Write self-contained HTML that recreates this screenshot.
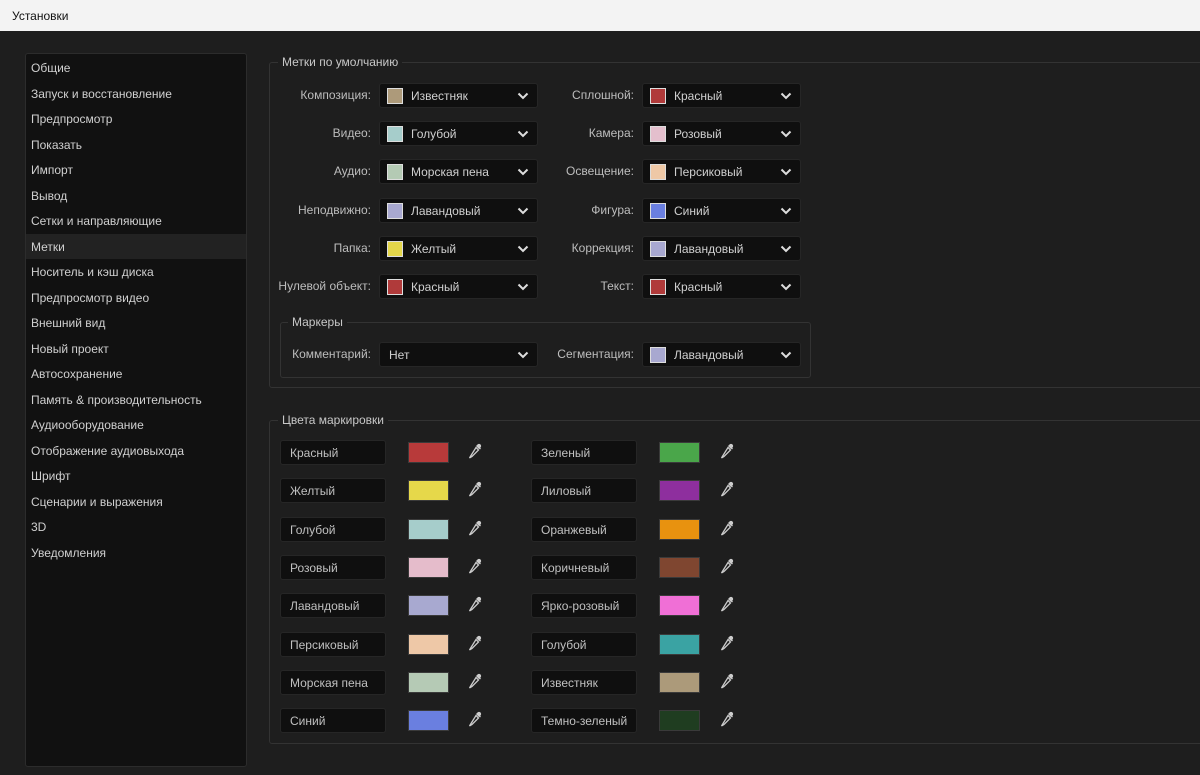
<!DOCTYPE html>
<html><head><meta charset="utf-8"><style>
*{box-sizing:border-box;margin:0;padding:0}
body{width:1200px;height:775px;background:#1e1e1e;font-family:"Liberation Sans","DejaVu Sans",sans-serif;font-size:12px;color:#c8c8c8;position:relative;overflow:hidden}
.title{position:absolute;left:0;top:0;width:1200px;height:31px;background:#f3f3f3;color:#111;font-size:12px;padding:9px 0 0 12px}
.side{position:absolute;left:25px;top:53px;width:222px;height:714px;background:#111;border:1px solid #2c2c2c;border-radius:3px}
.side div{position:absolute;left:0;width:220px;height:25px;padding:6px 0 0 5px;color:#d0d0d0}
.side div.sel{background:#222}
.grp{position:absolute;border:1px solid #333;border-radius:3px}
.gt{position:absolute;background:#1e1e1e;padding:0 4px;color:#c8c8c8}
.lbl{position:absolute;text-align:right;color:#bdbdbd}
.dd{position:absolute;width:159px;height:25px;background:#0f0f0f;border:1px solid #262626;border-radius:3px;color:#d0d0d0;padding:5px 0 0 31px}
.dd.n{padding-left:9px}
.dd .sw{position:absolute;left:7px;top:4px;width:16px;height:16px;border:1px solid #ddd}
.dd svg{position:absolute;right:8px;top:8px}
.tb{position:absolute;width:106px;height:25px;background:#0f0f0f;border:1px solid #262626;border-radius:3px;padding:5px 0 0 9px;color:#c0c0c0}
.cs{position:absolute;width:41px;height:21px;border:1px solid #3a3a3a}
.ed{position:absolute}
</style></head><body>
<div class="title">Установки</div>
<div class="side">
<div style="top:1px">Общие</div><div style="top:27px">Запуск и восстановление</div><div style="top:52px">Предпросмотр</div><div style="top:78px">Показать</div><div style="top:103px">Импорт</div><div style="top:129px">Вывод</div><div style="top:154px">Сетки и направляющие</div><div class="sel" style="top:180px">Метки</div><div style="top:205px">Носитель и кэш диска</div><div style="top:231px">Предпросмотр видео</div><div style="top:256px">Внешний вид</div><div style="top:282px">Новый проект</div><div style="top:307px">Автосохранение</div><div style="top:333px">Память &amp; производительность</div><div style="top:358px">Аудиооборудование</div><div style="top:384px">Отображение аудиовыхода</div><div style="top:409px">Шрифт</div><div style="top:435px">Сценарии и выражения</div><div style="top:460px">3D</div><div style="top:486px">Уведомления</div>
</div>
<div class="grp" style="left:269px;top:62px;width:940px;height:326px"></div>
<div class="gt" style="left:278px;top:55px">Метки по умолчанию</div>
<div class="grp" style="left:280px;top:322px;width:531px;height:56px"></div>
<div class="gt" style="left:288px;top:315px">Маркеры</div>
<div class="grp" style="left:269px;top:420px;width:940px;height:324px"></div>
<div class="gt" style="left:278px;top:413px">Цвета маркировки</div>
<div id="c"></div>
<script>
var chev='<svg width="12" height="8" viewBox="0 0 12 8"><path d="M1.5 1.5L6 6L10.5 1.5" stroke="#ddd" stroke-width="2" fill="none"/></svg>';
var h='';
function dd(x,y,label,lx,col,txt){
 h+='<div class="lbl" style="left:'+(lx-160)+'px;width:160px;top:'+(y-7)+'px">'+label+'</div>';
 h+='<div class="dd'+(col?'':' n')+'" style="left:'+x+'px;top:'+(y-12)+'px">'+(col?'<span class="sw" style="background:'+col+'"></span>':'')+txt+chev+'</div>';
}
var L=[["Композиция:","#ad9a7a","Известняк"],["Видео:","#a6cdcb","Голубой"],["Аудио:","#b4cab4","Морская пена"],["Неподвижно:","#a8a8d0","Лавандовый"],["Папка:","#e3d64a","Желтый"],["Нулевой объект:","#b03a3a","Красный"]];
var R=[["Сплошной:","#b03a3a","Красный"],["Камера:","#e4bfcd","Розовый"],["Освещение:","#eec8a6","Персиковый"],["Фигура:","#6a7fe0","Синий"],["Коррекция:","#a8a8d0","Лавандовый"],["Текст:","#b03a3a","Красный"]];
var ys=[95,133,171,210,248,286];
for(var i=0;i<6;i++){dd(379,ys[i],L[i][0],371,L[i][1],L[i][2]);dd(642,ys[i],R[i][0],634,R[i][1],R[i][2]);}
dd(379,354,"Комментарий:",371,null,"Нет");dd(642,354,"Сегментация:",634,"#a8a8d0","Лавандовый");
var eye='<svg width="16" height="18" viewBox="0 0 16 18"><path d="M10 2.5l3.5 3.5M9 4.5l2.5 2.5L5 13.5l-2.5 1.5 1.5-2.5z" stroke="#ccc" stroke-width="1.3" fill="none"/><path d="M10.5 1.5a1.8 1.8 0 0 1 3 3l-1.5 1.5-3-3z" fill="#ccc"/></svg>';
var CL=[["Красный","#b83a3a"],["Желтый","#e6d84a"],["Голубой","#a6cdcb"],["Розовый","#e5bccb"],["Лавандовый","#a8a9d0"],["Персиковый","#eec8a7"],["Морская пена","#b5cab5"],["Синий","#6a7fe0"]];
var CR=[["Зеленый","#4aa64a"],["Лиловый","#8e2f9e"],["Оранжевый","#e8920f"],["Коричневый","#7f4630"],["Ярко-розовый","#f06fd6"],["Голубой","#3aa3a3"],["Известняк","#ac9a7a"],["Темно-зеленый","#1f3d20"]];
var cy=[452,490,529,567,605,644,682,720];
for(var i=0;i<8;i++){var y=cy[i];
 h+='<div class="tb" style="left:280px;top:'+(y-12)+'px">'+CL[i][0]+'</div><div class="cs" style="left:408px;top:'+(y-10)+'px;background:'+CL[i][1]+'"></div><div class="ed" style="left:467px;top:'+(y-9)+'px">'+eye+'</div>';
 h+='<div class="tb" style="left:531px;top:'+(y-12)+'px">'+CR[i][0]+'</div><div class="cs" style="left:659px;top:'+(y-10)+'px;background:'+CR[i][1]+'"></div><div class="ed" style="left:719px;top:'+(y-9)+'px">'+eye+'</div>';
}
document.getElementById('c').innerHTML=h;
</script>
</body></html>
